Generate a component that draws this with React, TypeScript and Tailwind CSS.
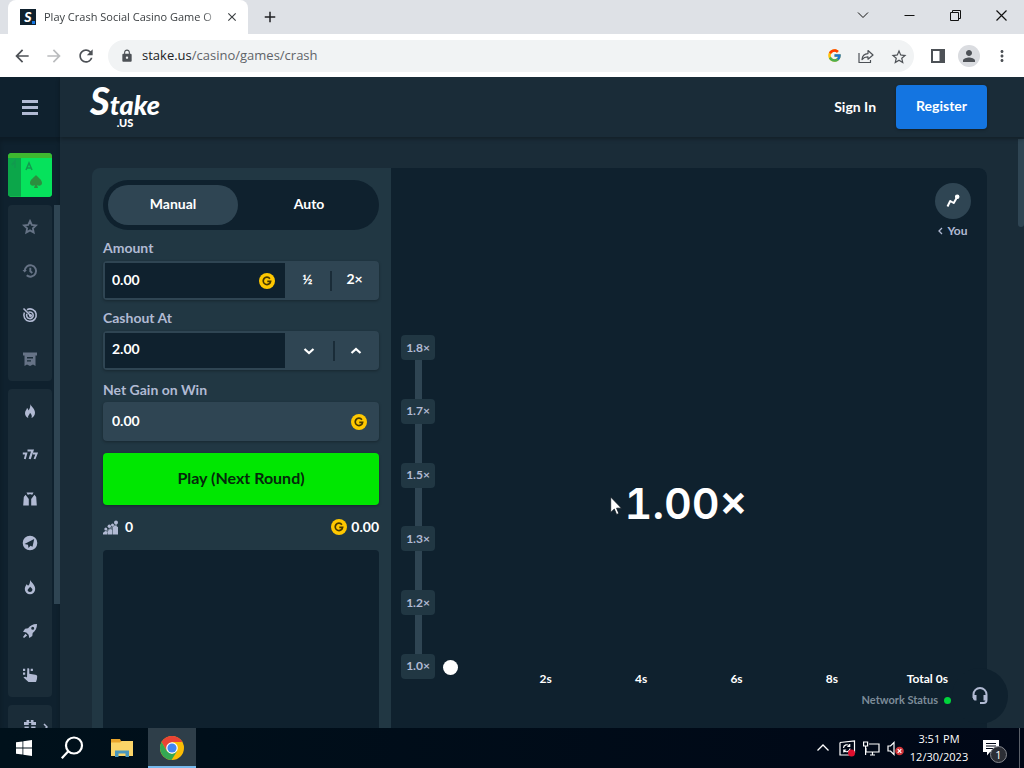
import React from "react";
import type { ReactNode } from "react";
import { FcGoogle } from "react-icons/fc";
import {
  MdArrowBack,
  MdArrowForward,
  MdClose,
  MdLock,
  MdRefresh,
  MdStarBorder,
  MdAdd,
  MdPerson,
  MdMoreVert,
} from "react-icons/md";

function BrowserTabs() {
  return (
    <div className="flex h-[34px] shrink-0 items-end justify-between bg-[#dee1e6]">
      <div className="flex h-full items-center pl-2">
        <div className="flex h-full w-60 items-center rounded-t-lg bg-white pr-2 pl-3">
          <span className="relative mr-2 grid size-4 shrink-0 place-items-center bg-[#0f212e] font-['Lato'] text-sm leading-4 font-black text-white italic">
            S
            <i className="absolute right-px bottom-px size-[3px] bg-[#1475e1]" />
          </span>
          <span className="min-w-0 flex-1 [mask-image:linear-gradient(to_right,black_90%,transparent)] text-[11px] whitespace-nowrap text-[#3c4043]">
            Play Crash Social Casino Game O
          </span>
          <button aria-label="Close tab" className="ml-1 grid size-4 place-items-center text-[#3c4043]">
            <MdClose size={14} />
          </button>
        </div>
        <button aria-label="New tab" className="ml-3 grid size-5 place-items-center text-[#202124]">
          <MdAdd size={18} />
        </button>
      </div>
      <div className="flex h-[30px] items-center self-start text-[#111]">
        <button aria-label="Search tabs" className="grid w-[46px] place-items-center">
          <svg width="12" height="8" viewBox="0 0 12 8" fill="none" stroke="currentColor">
            <path d="M1 1.5 6 6.5 11 1.5" />
          </svg>
        </button>
        <button aria-label="Minimize" className="grid w-[46px] place-items-center">
          <svg width="11" height="11" viewBox="0 0 11 11" fill="none" stroke="currentColor">
            <path d="M.5 5.5h10" />
          </svg>
        </button>
        <button aria-label="Restore" className="grid w-[46px] place-items-center">
          <svg width="11" height="11" viewBox="0 0 11 11" fill="none" stroke="currentColor">
            <path d="M.5 2.5h8v8h-8zM2.5 2.5v-2h8v8h-2" />
          </svg>
        </button>
        <button aria-label="Close" className="grid w-[46px] place-items-center">
          <svg width="11" height="11" viewBox="0 0 11 11" fill="none" stroke="currentColor" strokeWidth="1.2">
            <path d="m.5.5 10 10M10.500.5l-10 10" />
          </svg>
        </button>
      </div>
    </div>
  );
}

function BrowserToolbar() {
  return (
    <div className="flex h-[43px] shrink-0 items-center bg-white pr-3 pl-3 text-[#4d5156]">
      <button aria-label="Back" className="grid size-5 place-items-center">
        <MdArrowBack size={20} />
      </button>
      <button aria-label="Forward" className="ml-3 grid size-5 place-items-center text-[#babcbe]">
        <MdArrowForward size={20} />
      </button>
      <button aria-label="Reload" className="ml-3 grid size-5 place-items-center">
        <MdRefresh size={20} />
      </button>
      <div className="ml-3 flex h-8 flex-1 items-center gap-2 rounded-full bg-[#f1f3f4] pr-2 pl-3">
        <MdLock size={14} />
        <div role="textbox" aria-label="Address" className="flex-1 text-[13px] text-[#5f6368]">
          <span className="text-[#202124]">stake.us</span>/casino/games/crash
        </div>
        <div className="flex items-center gap-4">
          <button aria-label="Google" className="grid size-4 place-items-center">
            <FcGoogle size={15} />
          </button>
          <button aria-label="Share" className="grid size-4 place-items-center">
            <svg width="16" height="16" viewBox="0 0 16 16" fill="none" stroke="currentColor" strokeWidth="1.2">
              <path d="M1 5v9.500h11.500V12M4 11.500c.3-4 2.500-5.700 6-5.900V2.500l5 4.500-5 4.200V8.900C7.500 8.800 5.700 9.500 4 11.500z" strokeLinejoin="round" />
            </svg>
          </button>
          <button aria-label="Bookmark" className="grid size-4 place-items-center">
            <MdStarBorder size={18} />
          </button>
        </div>
      </div>
      <div className="ml-4 flex items-center">
        <button aria-label="Side panel" className="grid size-4 place-items-center">
          <svg width="14" height="14" viewBox="0 0 14 14">
            <path d="M1 1h12v12H1z" fill="none" stroke="currentColor" strokeWidth="2" />
            <path d="M8.500 1H13v12H8.500z" fill="currentColor" />
          </svg>
        </button>
        <button aria-label="Profile" className="ml-3 grid size-[22px] place-items-center rounded-full bg-[#dadce0]">
          <MdPerson size={18} />
        </button>
        <button aria-label="Menu" className="ml-3 grid size-5 place-items-center">
          <MdMoreVert size={18} />
        </button>
      </div>
    </div>
  );
}

const games: { name: string; icon: ReactNode; dim?: boolean }[] = [
  {
    name: "Favourites",
    dim: true,
    icon: <path d="m8 2 1.800 3.900 4.200.5-3.100 2.900.8 4.200L8 11.400l-3.700 2.100.8-4.200L2 6.400l4.200-.5z" fill="none" stroke="currentColor" strokeWidth="1.800" />,
  },
  {
    name: "Recent",
    dim: true,
    icon: (
      <g fill="none" stroke="currentColor" strokeWidth="1.900">
        <path d="M2.700 8a5.700 5.700 0 1 1 2 4.300" />
        <path d="M8.300 4.800v3.500l2 1.600" />
        <path d="M.5 7h4.400L2.700 9.600z" fill="currentColor" stroke="none" />
      </g>
    ),
  },
  {
    name: "Challenges",
    icon: (
      <g fill="none" stroke="currentColor" strokeWidth="1.600">
        <path d="M5 2.700A6.200 6.200 0 1 1 2.400 5.500" />
        <path d="M6.500 5.300a3.300 3.300 0 1 1-1.600 1.600" />
        <path d="M1.500 1.500 8.500 8.500" />
        <circle cx="8.500" cy="8.500" r=".8" fill="currentColor" />
      </g>
    ),
  },
  {
    name: "My Bets",
    dim: true,
    icon: (
      <path
        d="M1 1.500h14v3h-1.500V15L11 13.400 8 15l-3-1.600L2.500 15V4.500H1zM5 6v1.400h6V6zm0 3.200v1.400h4V9.200z"
        fill="currentColor"
        fillRule="evenodd"
      />
    ),
  },
];

const categories: { name: string; icon: ReactNode }[] = [
  {
    name: "Trending",
    icon: <path d="M8.200 1c.8 2.500 4.800 4.500 4.800 8.800 0 2.700-1.600 4.500-3.500 5.200.9-2.400-.2-4-1.600-5.200.1 1.900-2.500 2.700-1.600 5.200C4.400 14.300 3 12.600 3 10.300 3 8.200 4.500 7 5 5c.9.600 1.300 1.500 1.300 2.400C7.900 6 8.600 3.500 8.200 1z" fill="currentColor" />,
  },
  {
    name: "Slots",
    icon: (
      <g fill="none" stroke="currentColor" strokeLinejoin="miter">
        <path d="M5.500 3.500h5L7.700 12" strokeWidth="2.200" />
        <path d="M.8 6.500h3.500L2.800 12M11 6.500h3.700L12.500 12" strokeWidth="1.900" />
      </g>
    ),
  },
  {
    name: "Game Shows",
    icon: <path d="M4.500 1.500h7l-1.200 2.300H9.600L9 3.200H7l-.6.600h-.7zM3.600 3.800 6.800 8v6.500H1.200L1.800 6zM12.400 3.800 9.200 8v6.500h5.600L14.200 6z" fill="currentColor" />,
  },
  {
    name: "Originals",
    icon: <path fillRule="evenodd" d="M8 .7a7.300 7.300 0 1 1 0 14.600A7.300 7.300 0 0 1 8 .7zm4.200 3.300L2.500 9l3.500.8L6.500 13l2-2.200 2 1z" fill="currentColor" />,
  },
  {
    name: "New Releases",
    icon: <path fillRule="evenodd" d="M8 .8c.8 2.600 5.200 4.500 5.200 9.200a5.200 5.200 0 0 1-10.400 0c0-2 1-3.200 1.700-4.800.8.400 1.300 1 1.500 1.600C7.600 5.500 8.300 3.500 8 .8zm.2 6.900-2.400 2.800c-.7 1.600.8 2.500 2.200 2.500s2.700-1.200 2.400-2.700C10.100 9.400 9 8.800 8.200 7.700z" fill="currentColor" />,
  },
  {
    name: "Bonus Buy",
    icon: (
      <path
        fillRule="evenodd"
        d="M15 1c.1 4-1.500 7-4.300 8.900l-.4 3-3 2.100-.7-3.300L4.300 9.400 1 8.700l2.100-3 3-.4C8 2.500 11 .9 15 1zm-4.300 2.700a1.500 1.500 0 1 0 0 3 1.500 1.500 0 0 0 0-3zM3.400 10.800l1.800 1.800L2 15l-1-1z"
        fill="currentColor"
      />
    ),
  },
  {
    name: "Instant Win",
    icon: (
      <path
        d="M5.300 1.500c.6-.6 2-.3 2 .7v4.600l6 .9c1 .2 1.900.8 1.900 1.700 0 1.800-.4 3.600-1.200 5.600H6.500L1.500 10.600c.8-1.300 2.300-1.100 3.500-.2zM1 1.800h2.200V4H1zM1 5.500h2.200v2.200H1zM8.700 1.800h2.200V4H8.700z"
        fill="currentColor"
      />
    ),
  },
];

function SideItem({ name, dim, children }: { name: string; dim?: boolean; children: ReactNode }) {
  return (
    <a href="#" aria-label={name} className="grid size-11 place-items-center text-[#b1bad3]">
      <svg width="16" height="16" viewBox="0 0 16 16" className={dim ? "opacity-50" : ""}>
        {children}
      </svg>
    </a>
  );
}

function Sidebar() {
  return (
    <aside className="flex w-15 shrink-0 flex-col overflow-hidden bg-[#0f212e]">
      <div className="grid h-15 shrink-0 place-items-center">
        <button aria-label="Open menu" className="flex flex-col gap-[3px]">
          <i className="h-[3px] w-4 bg-[#b1bad3]" />
          <i className="h-[3px] w-4 bg-[#b1bad3]" />
          <i className="h-[3px] w-4 bg-[#b1bad3]" />
        </button>
      </div>
      <nav className="flex min-h-0 flex-1 flex-col gap-2 overflow-hidden pt-4 pl-2 shadow-[inset_0_4px_4px_rgba(0,0,0,0.2)]">
        <a href="#" aria-label="Casino" className="size-11 shrink-0 overflow-hidden rounded bg-[#08dc58]">
          <svg width="44" height="44" viewBox="0 0 44 44">
            <path d="M0 0h44v44H0z" fill="#12b84c" />
            <path d="M0 5h13v38H0z" fill="#0ca64a" />
            <path d="M13 5h31v39H13z" fill="#06e25c" />
            <path d="M0 0h44v5H0z" fill="#3fb82f" />
            <path d="m18 17 3-7 3 7M19 15h4M4 12l3-4v7" fill="none" stroke="#129a4f" strokeWidth="1.500" />
            <path d="M28 22c2 2.500 6 4.500 6 8 0 2.500-3 3.500-5 2l1 3h-4l1-3c-2 1.500-5 .5-5-2 0-3.500 4-5.500 6-8z" fill="#2b8f3e" />
          </svg>
        </a>
        <div className="flex min-h-0 flex-1 items-start justify-between">
          <div className="flex flex-col gap-2">
            <div className="rounded bg-[#1a2c38]">
              {games.map((g) => (
                <SideItem key={g.name} name={g.name} dim={g.dim}>
                  {g.icon}
                </SideItem>
              ))}
            </div>
            <div className="rounded bg-[#1a2c38]">
              {categories.map((c) => (
                <SideItem key={c.name} name={c.name}>
                  {c.icon}
                </SideItem>
              ))}
            </div>
            <a href="#" aria-label="Promotions" className="relative grid size-11 place-items-center rounded bg-[#1a2c38] text-[#b1bad3]">
              <svg width="14" height="14" viewBox="0 0 14 14" fill="currentColor">
                <path d="M3.500 0h2.700v2h1.600V0h2.700v2H13v3H8.200V3H5.800v2H1V2h2.500zM1.500 6.500h4.300V14H1.500zM8.200 6.500h4.300V14H8.200z" />
              </svg>
              <svg width="5" height="8" viewBox="0 0 5 8" fill="none" stroke="currentColor" strokeWidth="1.500" className="absolute right-1">
                <path d="m1 1 3 3-3 3" />
              </svg>
            </a>
          </div>
          <i className="h-[399px] w-1.5 shrink-0 bg-[#2f4553]" />
        </div>
      </nav>
    </aside>
  );
}

function Coin() {
  return (
    <svg width="16" height="16" viewBox="0 0 16 16" aria-label="Gold Coins" className="shrink-0">
      <circle cx="8" cy="8" r="8" fill="#ffc800" />
      <path d="M10.900 5.700A3.700 3.700 0 1 0 11.600 8.300H8.300" fill="none" stroke="#473800" strokeWidth="1.700" />
    </svg>
  );
}

function Chevron({ up }: { up?: boolean }) {
  return (
    <svg width="12" height="8" viewBox="0 0 12 8" fill="none" stroke="currentColor" strokeWidth="2.200">
      <path d={up ? "M1.500 6 6 2l4.500 4" : "M1.500 2 6 6l4.500-4"} />
    </svg>
  );
}

const fieldBox = "flex h-[39px] items-stretch rounded bg-[#2f4553] p-0.5 shadow-[0_1px_3px_rgba(0,0,0,0.3)]";

function BetPanel() {
  return (
    <form className="flex w-[299px] shrink-0 flex-col bg-[#213743] px-3 pt-3 pl-[11px] text-sm font-bold text-white" onSubmit={(e) => e.preventDefault()}>
      <div className="flex h-[50px] gap-1.5 rounded-full bg-[#0f212e] p-[5px]">
        <button type="button" className="flex-1 rounded-full bg-[#2f4553] pb-0.5">
          Manual
        </button>
        <button type="button" className="flex-1 pb-0.5">
          Auto
        </button>
      </div>

      <label htmlFor="amount" className="mt-2 mb-[3px] leading-5 text-[#b1bad3]">
        Amount
      </label>
      <div className={fieldBox}>
        <div className="flex min-w-0 flex-1 items-center bg-[#0f212e] pr-2.5">
          <input id="amount" defaultValue="0.00" className="h-full w-full min-w-0 bg-transparent pb-[3px] pl-[7px] outline-none" />
          <Coin />
        </div>
        <div className="flex w-[92px] items-center">
          <button type="button" className="flex-1 pb-[3px]">
            ½
          </button>
          <i className="h-5 w-0.5 bg-[#1a2c38]" />
          <button type="button" className="flex-1 pb-[3px]">
            2×
          </button>
        </div>
      </div>

      <label htmlFor="cashout" className="mt-2 mb-[3px] leading-5 text-[#b1bad3]">
        Cashout At
      </label>
      <div className={fieldBox}>
        <input id="cashout" defaultValue="2.00" className="min-w-0 flex-1 bg-[#0f212e] pb-[3px] pl-[7px] outline-none" />
        <div className="flex w-[92px] items-center">
          <button type="button" aria-label="Decrease" className="grid w-12 place-items-center">
            <Chevron />
          </button>
          <i className="h-5 w-0.5 bg-[#1a2c38]" />
          <button type="button" aria-label="Increase" className="grid flex-1 place-items-center">
            <Chevron up />
          </button>
        </div>
      </div>

      <label htmlFor="gain" className="mt-2.5 mb-0.5 leading-5 text-[#b1bad3]">
        Net Gain on Win
      </label>
      <div className="flex h-[39px] items-center rounded bg-[#2f4553] pr-3 shadow-[0_1px_3px_rgba(0,0,0,0.3)]">
        <input id="gain" readOnly value="0.00" className="h-full min-w-0 flex-1 bg-transparent pb-[3px] pl-[9px] outline-none" />
        <Coin />
      </div>

      <button type="submit" className="mt-3 h-[52px] rounded bg-[#00e701] pb-0.5 text-base text-[#05290b] shadow-[0_1px_3px_rgba(0,0,0,0.3)]">
        Play (Next Round)
      </button>

      <div className="mt-3 flex h-5 items-center justify-between">
        <span className="flex items-center gap-[7px]">
          <svg width="15" height="15" viewBox="0 0 15 15" fill="#b1bad3">
            <path d="M0 14.500v-1.700L2.500 11l2 1v2.500zM5 14.500V11l2-2 2.500 1v4.500zM10 14.500V7l2-1.500L15 7v7.500z" />
            <circle cx="2.800" cy="8.900" r="1.500" />
            <circle cx="6.300" cy="6.200" r="1.700" />
            <circle cx="9.500" cy="4.900" r="1.500" />
            <circle cx="13" cy="2.500" r="2" />
            <path d="m1 12 13-9v4L3 14z" opacity=".45" />
          </svg>
          0
        </span>
        <span className="flex items-center gap-1">
          <Coin />
          0.00
        </span>
      </div>
      <div className="mt-[13px] min-h-0 flex-1 rounded-t bg-[#0f212e]" />
    </form>
  );
}

const multipliers = ["1.8×", "1.7×", "1.5×", "1.3×", "1.2×", "1.0×"];
const times = ["2s", "4s", "6s", "8s", "Total 0s"];

function CrashChart() {
  return (
    <section className="flex min-w-0 flex-1 flex-col rounded-tr-lg bg-[#0f212e] font-bold text-white">
      <div className="flex justify-end pt-[15px] pr-4">
        <button className="flex flex-col items-center text-xs text-[#b1bad3]">
          <span className="grid size-9 place-items-center rounded-full bg-[#2f4553]">
            <svg width="14" height="14" viewBox="0 0 14 14" fill="none" stroke="white" strokeWidth="2">
              <path d="M1.500 12.500 4.200 7 7.700 9 11.200 3" strokeLinejoin="round" />
              <circle cx="11.200" cy="2.800" r="1.300" fill="white" />
            </svg>
          </span>
          <span className="mt-1 flex items-center gap-1 leading-4">
            <svg width="5" height="8" viewBox="0 0 5 8" fill="none" stroke="currentColor" strokeWidth="1.300">
              <path d="M4 1 1 4l3 3" />
            </svg>
            You
          </span>
        </button>
      </div>

      <div className="mt-24 flex h-[344px] shrink-0 pl-2.5">
        <div className="flex w-[34px] flex-col items-center text-xs text-[#b1bad3]">
          {multipliers.map((m, i) => (
            <React.Fragment key={m}>
              {i > 0 && <i className="w-[7px] flex-1 bg-[#2f4553]" />}
              <span className="grid h-[25px] w-full place-items-center rounded-sm bg-[#213743]">{m}</span>
            </React.Fragment>
          ))}
        </div>
        <div className="relative min-w-0 flex-1">
          <div className="flex h-full items-center justify-center pr-[50px] pb-2 font-['Inter'] text-[43px] leading-none font-semibold tabular-nums">
            1.00×
          </div>
          <i className="absolute bottom-1 left-2 size-[15px] rounded-full bg-white" />
        </div>
      </div>

      <div className="-mt-2 flex pr-3 pl-[107px] text-xs leading-4">
        {times.map((t) => (
          <span key={t} className="flex-1 text-center">
            {t}
          </span>
        ))}
      </div>
      <div className="mt-[5px] flex items-center justify-end gap-1.5 pr-9 text-[11px] leading-4 text-[#7d8c99]">
        Network Status
        <i className="size-[7px] rounded-full bg-[#00d43b]" />
      </div>
    </section>
  );
}

function SiteHeader() {
  return (
    <header className="z-10 flex h-15 shrink-0 items-center justify-between bg-[#1a2c38] pr-[37px] pl-[30px] text-sm font-bold text-white shadow-[0_2px_4px_rgba(0,0,0,0.3)]">
      <a href="#" aria-label="Stake.us" className="flex flex-col items-center leading-none italic">
        <span className="text-[27px] leading-7 font-black">
          <span className="text-[38px] leading-7">S</span>take
        </span>
        <span className="-mt-0.5 text-[11px] leading-3 font-black not-italic">.US</span>
      </a>
      <div className="flex items-center gap-5">
        <button className="pb-px">Sign In</button>
        <button className="h-11 rounded bg-[#1475e1] px-5 pb-0.5 shadow-[0_1px_3px_rgba(0,0,0,0.3)]">Register</button>
      </div>
    </header>
  );
}

function Taskbar() {
  return (
    <footer className="flex h-10 shrink-0 items-center justify-between bg-linear-to-r from-[#00111b] to-[#000716] text-white">
      <div className="flex h-full">
        <button aria-label="Start" className="grid w-12 place-items-center">
          <svg width="16" height="16" viewBox="0 0 16 16" fill="white">
            <path d="M0 2.300 6.500 1.400v6.200H0zM7.300 1.300 16 0v7.600H7.300zM0 8.400h6.500v6.200L0 13.700zM7.300 8.400H16V16l-8.700-1.300z" />
          </svg>
        </button>
        <button aria-label="Search" className="grid w-12 place-items-center">
          <svg width="24" height="24" viewBox="0 0 24 24" fill="none" stroke="white" strokeWidth="2.200">
            <circle cx="14" cy="9.500" r="8" />
            <path d="m8.300 15.300-6.500 7" />
          </svg>
        </button>
        <button aria-label="File Explorer" className="grid w-[52px] place-items-center">
          <svg width="22" height="18" viewBox="0 0 22 18">
            <path d="M0 0h9l1 2h12v15H0z" fill="#e9a52b" />
            <path d="M0 3.500h9L11 2h11v15H0z" fill="#fbd568" />
            <path d="M4 18v-6.500h14V18h-3.500v-3.500h-7V18z" fill="#4a97bd" />
          </svg>
        </button>
        <button aria-label="Google Chrome" className="grid w-12 place-items-center bg-[#2e3e49] shadow-[inset_0_-2px_0_#76b9ed]">
          <svg width="24" height="24" viewBox="0 0 24 24">
            <circle cx="12" cy="12" r="12" fill="#fbbc05" />
            <path d="M1.600 6A12 12 0 0 1 22.400 6H12l-5.200 9z" fill="#ea4335" />
            <path d="M1.600 6A12 12 0 0 0 11.500 24l5.700-9-5.200 3-5.200-3z" fill="#34a853" />
            <circle cx="12" cy="12" r="5.800" fill="white" />
            <circle cx="12" cy="12" r="4.600" fill="#4285f4" />
          </svg>
        </button>
      </div>
      <div className="flex h-full items-center">
        <button aria-label="Show hidden icons" className="grid w-6 place-items-center">
          <svg width="12" height="8" viewBox="0 0 12 8" fill="none" stroke="white" strokeWidth="1.300">
            <path d="m.500 6.500 5.500-5.500 5.500 5.500" />
          </svg>
        </button>
        <button aria-label="Updates" className="grid w-6 place-items-center">
          <svg width="17" height="17" viewBox="0 0 17 17" fill="none" stroke="white" strokeWidth="1.200">
            <path d="M1 2.500 15.500.8V13M1 2.500V15h9" />
            <path d="M4.500 8a3.300 3.300 0 0 1 6-1.800M10.700 4v2.500H8.300M11 8.500a3.300 3.300 0 0 1-6 1.800M4.800 12.500V10h2.400" />
            <circle cx="12.500" cy="13" r="3.500" fill="#e0102f" stroke="none" />
          </svg>
        </button>
        <button aria-label="Network" className="grid w-6 place-items-center">
          <svg width="17" height="15" viewBox="0 0 17 15" fill="none" stroke="white" strokeWidth="1.200">
            <path d="M6 3h10v8H3V7M7 14h5M9.500 11v3M.6 1h4v4h-4zM2.600 5v9" />
          </svg>
        </button>
        <button aria-label="Volume" className="grid w-6 place-items-center">
          <svg width="17" height="15" viewBox="0 0 17 15" fill="none" stroke="white" strokeWidth="1.200">
            <path d="M1 5h2.500L7 1.500v12L3.500 10H1z" />
            <circle cx="12.500" cy="10" r="4.300" fill="#d13438" stroke="none" />
            <path d="m10.700 8.200 3.600 3.600M14.300 8.200l-3.600 3.600" />
          </svg>
        </button>
        <div className="flex w-16 flex-col items-center text-[11px] leading-[18px] whitespace-nowrap">
          <span>3:51 PM</span>
          <span>12/30/2023</span>
        </div>
        <button aria-label="Notifications, 1 new" className="relative mr-2 grid h-full w-10 place-items-center">
          <svg width="16" height="16" viewBox="0 0 16 16">
            <path d="M0 0h16v12H7l-3 3.500V12H0z" fill="white" />
            <path d="M3 3.500h10M3 6h10M3 8.500h7" stroke="#000716" />
          </svg>
          <span className="absolute right-1 bottom-[5px] grid size-[17px] place-items-center rounded-full border border-[#85888e] bg-[#2b2e35] text-[11px] leading-none">
            1
          </span>
        </button>
        <i className="mr-1 h-full w-px bg-[#5b6069]" />
      </div>
    </footer>
  );
}

export default function App() {
  return (
    <div className="relative flex h-screen flex-col overflow-hidden bg-[#1a2c38] font-['Open_Sans','Noto_Sans',sans-serif]">
      <BrowserTabs />
      <BrowserToolbar />
      <div className="relative flex min-h-0 flex-1 overflow-hidden font-['Lato','Open_Sans',sans-serif]">
        <Sidebar />
        <div className="flex min-w-0 flex-1 flex-col">
          <SiteHeader />
          <main className="flex min-h-0 flex-1 pt-[31px] pr-[37px] pl-8">
            <div className="flex min-w-0 flex-1 overflow-hidden rounded-t-lg">
              <BetPanel />
              <CrashChart />
            </div>
          </main>
        </div>
        <i className="absolute top-[62px] right-0 h-[88px] w-1.5 rounded-b bg-[#2f4553]" />
        <button aria-label="Live Support" className="absolute right-4 bottom-1 grid size-14 place-items-center rounded-full bg-[#0f212e] text-[#b1bad3]">
          <svg width="16" height="18" viewBox="0 0 16 18" fill="none" stroke="currentColor" strokeWidth="2">
            <path d="M1.500 11V7.500a6.500 6.500 0 0 1 13 0V13c0 2-1.200 3-3 3H8" />
            <path d="M1 8h3.500v5.500H2.500L1 12zM11.500 8H15v5.500h-3.500z" fill="currentColor" stroke="none" />
          </svg>
        </button>
      </div>
      <Taskbar />
      <svg width="12" height="20" viewBox="0 0 12 20" className="absolute top-[496px] left-[610px]">
        <path d="M.7 1v15.500l3.600-3.400 2.300 5.400 2.300-1-2.300-5.300h4.900z" fill="white" stroke="#0b1620" strokeWidth=".8" />
      </svg>
    </div>
  );
}
